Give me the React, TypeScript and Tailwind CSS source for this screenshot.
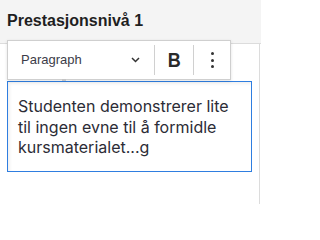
export default function App() {
  return (
    <div className="relative w-[261px] h-[204px] overflow-hidden bg-white">
      {/* Header */}
      <div className="h-[44px] bg-[#f4f4f4] border-b border-[#dcdcdc] pl-[7px] pt-[12px]">
        <h2 className="text-[16px] leading-[18px] font-bold text-[#1f1f1f] font-['Liberation_Sans',Arial,sans-serif]">
          Prestasjonsnivå 1
        </h2>
      </div>

      {/* Body */}
      <div className="w-[260px] h-[160px] border-r border-[#dcdcdc] pl-[7px] pt-[37px]">
        <div className="w-[245px] h-[91px] border border-[#2f7ee0] pl-[10px] pt-[14px] shadow-[inset_2px_2px_3px_rgba(0,0,0,0.06)]">
          <p className="whitespace-nowrap text-[16px] leading-[20.5px] text-[#2c2c36] font-['Inter','Noto_Sans',sans-serif]">
            Studenten demonstrerer lite
            <br />
            til ingen evne til å formidle
            <br />
            kursmaterialet...g
          </p>
        </div>
      </div>

      {/* Floating toolbar */}
      <div className="absolute left-[7px] top-[40px] w-[224px] h-[40px] flex items-center bg-white border border-[#cfcfcf] shadow-[0_1px_3px_rgba(0,0,0,0.12)] font-['Liberation_Sans',Arial,sans-serif]">
        <div className="w-[146px] h-full flex items-center pl-[13px] pr-[14px]">
          <span className="text-[13px] text-[#3c3c48]">Paragraph</span>
          <svg className="ml-auto" width="9" height="6" viewBox="0 0 9 6" fill="none">
            <path d="M1 1l3.5 3.5L8 1" stroke="#333" strokeWidth="1.5" />
          </svg>
        </div>
        <div className="w-px h-[30px] bg-[#d0d0d0]" />
        <div className="w-[38px] h-full flex items-center justify-center">
          <span className="text-[20px] leading-none font-bold text-[#2a2a2a] scale-x-90">B</span>
        </div>
        <div className="w-px h-[30px] bg-[#d0d0d0]" />
        <div className="w-[36px] h-full flex flex-col items-center justify-center gap-[3.5px]">
          <span className="w-[3px] h-[3px] rounded-full bg-[#333]" />
          <span className="w-[3px] h-[3px] rounded-full bg-[#333]" />
          <span className="w-[3px] h-[3px] rounded-full bg-[#333]" />
        </div>
      </div>
      <div className="absolute left-[62px] top-[79px] w-[4px] h-[2px] bg-[#c4c4c4]" />
    </div>
  );
}
